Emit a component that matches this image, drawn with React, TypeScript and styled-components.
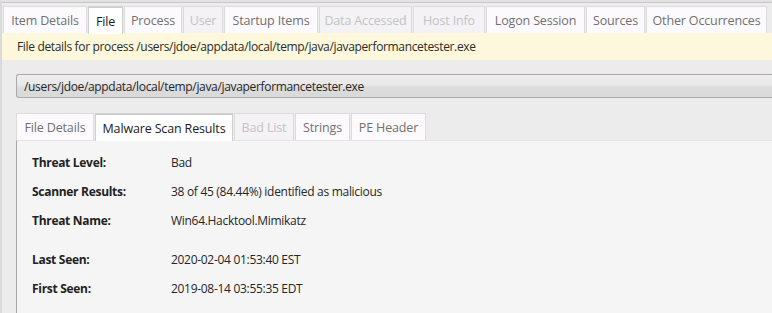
import styled, { createGlobalStyle } from 'styled-components'

const GlobalStyle = createGlobalStyle`
  html, body {
    margin: 0;
    padding: 0;
    background: #ececec;
    font-family: 'Open Sans', 'Noto Sans', sans-serif;
    font-size: 12px;
    overflow: hidden;
  }
`

const Frame = styled.div`
  width: 772px;
  height: 313px;
  box-sizing: border-box;
  border-top: 2px solid #e2e2e2;
  border-left: 2px solid #dadada;
  background: #ececec;
  display: flex;
  flex-direction: column;
  overflow: hidden;
`

const TopLine = styled.div`
  height: 1px;
  background: #c9c9c9;
`

const TabBar = styled.div<{ $inset?: number; $top?: number }>`
  display: flex;
  align-items: flex-end;
  padding-left: ${(p) => p.$inset ?? 0}px;
  margin-top: ${(p) => p.$top ?? 3}px;
  position: relative;
  z-index: 1;
`

const Tab = styled.div<{ $active?: boolean; $disabled?: boolean; $w: number }>`
  width: ${(p) => p.$w}px;
  height: 27px;
  box-sizing: border-box;
  display: flex;
  align-items: center;
  justify-content: center;
  white-space: nowrap;
  margin-right: 1px;
  letter-spacing: -0.15px;
  font-size: 12.5px;
  background: ${(p) => (p.$active ? '#ffffff' : p.$disabled ? '#f4f2f4' : '#fdfafd')};
  color: ${(p) => (p.$active ? '#1b1b1b' : p.$disabled ? '#c3c3c3' : '#707070')};
  border: 1px solid #dcdcdc;
  border-bottom: none;
  border-top: ${(p) => (p.$active ? '2px solid #2c4f8f' : '1px solid #dcdcdc')};
  ${(p) => p.$active && 'height: 28px; margin-bottom: -1px; border-color: #cfcfcf;'}
`

const Banner = styled.div`
  height: 27px;
  background: #fdf8dc;
  display: flex;
  align-items: center;
  padding-left: 15px;
  color: #2a2a2a;
  font-size: 12px;
  letter-spacing: -0.34px;
`

const Body = styled.div`
  flex: 1;
  display: flex;
  flex-direction: column;
  padding: 14px 0 0 14px;
`

const PathBox = styled.div`
  height: 24px;
  box-sizing: border-box;
  border: 1px solid #a9a9a9;
  border-right: none;
  border-radius: 3px 0 0 3px;
  background: linear-gradient(#efeded 0%, #e9e8e8 45%, #dddcdc 55%, #d9d9d9 100%);
  display: flex;
  align-items: center;
  padding-left: 7px;
  color: #262626;
  font-size: 12px;
  letter-spacing: -0.33px;
`

const Panel = styled.div`
  flex: 1;
  background: #f5f5f5;
  border-left: 1px solid #a8a8a8;
  border-top: 1px solid #e4e4e4;
  padding: 13px 0 0 15px;
  display: flex;
  flex-direction: column;
`

const Row = styled.div<{ $gap?: boolean }>`
  height: 29px;
  display: flex;
  align-items: flex-start;
  line-height: 18px;
  font-size: 12px;
  letter-spacing: -0.3px;
  margin-top: ${(p) => (p.$gap ? 10 : 0)}px;
`

const Label = styled.div`
  width: 139px;
  font-weight: 700;
  color: #222;
`

const Value = styled.div`
  color: #262626;
`

const topTabs = [
  { label: 'Item Details', w: 84 },
  { label: 'File', w: 35, active: true },
  { label: 'Process', w: 58 },
  { label: 'User', w: 40, disabled: true },
  { label: 'Startup Items', w: 94 },
  { label: 'Data Accessed', w: 93, disabled: true },
  { label: 'Host Info', w: 72, disabled: true },
  { label: 'Logon Session', w: 99 },
  { label: 'Sources', w: 59 },
  { label: 'Other Occurrences', w: 121 },
]

const subTabs = [
  { label: 'File Details', w: 78 },
  { label: 'Malware Scan Results', w: 138, active: true },
  { label: 'Bad List', w: 60, disabled: true },
  { label: 'Strings', w: 55 },
  { label: 'PE Header', w: 75 },
]

const rows = [
  { label: 'Threat Level:', value: 'Bad' },
  { label: 'Scanner Results:', value: '38 of 45 (84.44%) identified as malicious' },
  { label: 'Threat Name:', value: 'Win64.Hacktool.Mimikatz' },
  { label: 'Last Seen:', value: '2020-02-04 01:53:40 EST', gap: true },
  { label: 'First Seen:', value: '2019-08-14 03:55:35 EDT' },
]

export default function App() {
  return (
    <>
      <GlobalStyle />
      <Frame>
        <TopLine />
        <TabBar $inset={1}>
          {topTabs.map((t) => (
            <Tab key={t.label} $w={t.w} $active={t.active} $disabled={t.disabled}>
              {t.label}
            </Tab>
          ))}
        </TabBar>
        <Banner>File details for process /users/jdoe/appdata/local/temp/java/javaperformancetester.exe</Banner>
        <Body>
          <PathBox>/users/jdoe/appdata/local/temp/java/javaperformancetester.exe</PathBox>
          <TabBar $top={15}>
            {subTabs.map((t) => (
              <Tab key={t.label} $w={t.w} $active={t.active} $disabled={t.disabled}>
                {t.label}
              </Tab>
            ))}
          </TabBar>
          <Panel>
            {rows.map((r) => (
              <Row key={r.label} $gap={r.gap}>
                <Label>{r.label}</Label>
                <Value>{r.value}</Value>
              </Row>
            ))}
          </Panel>
        </Body>
      </Frame>
    </>
  )
}
